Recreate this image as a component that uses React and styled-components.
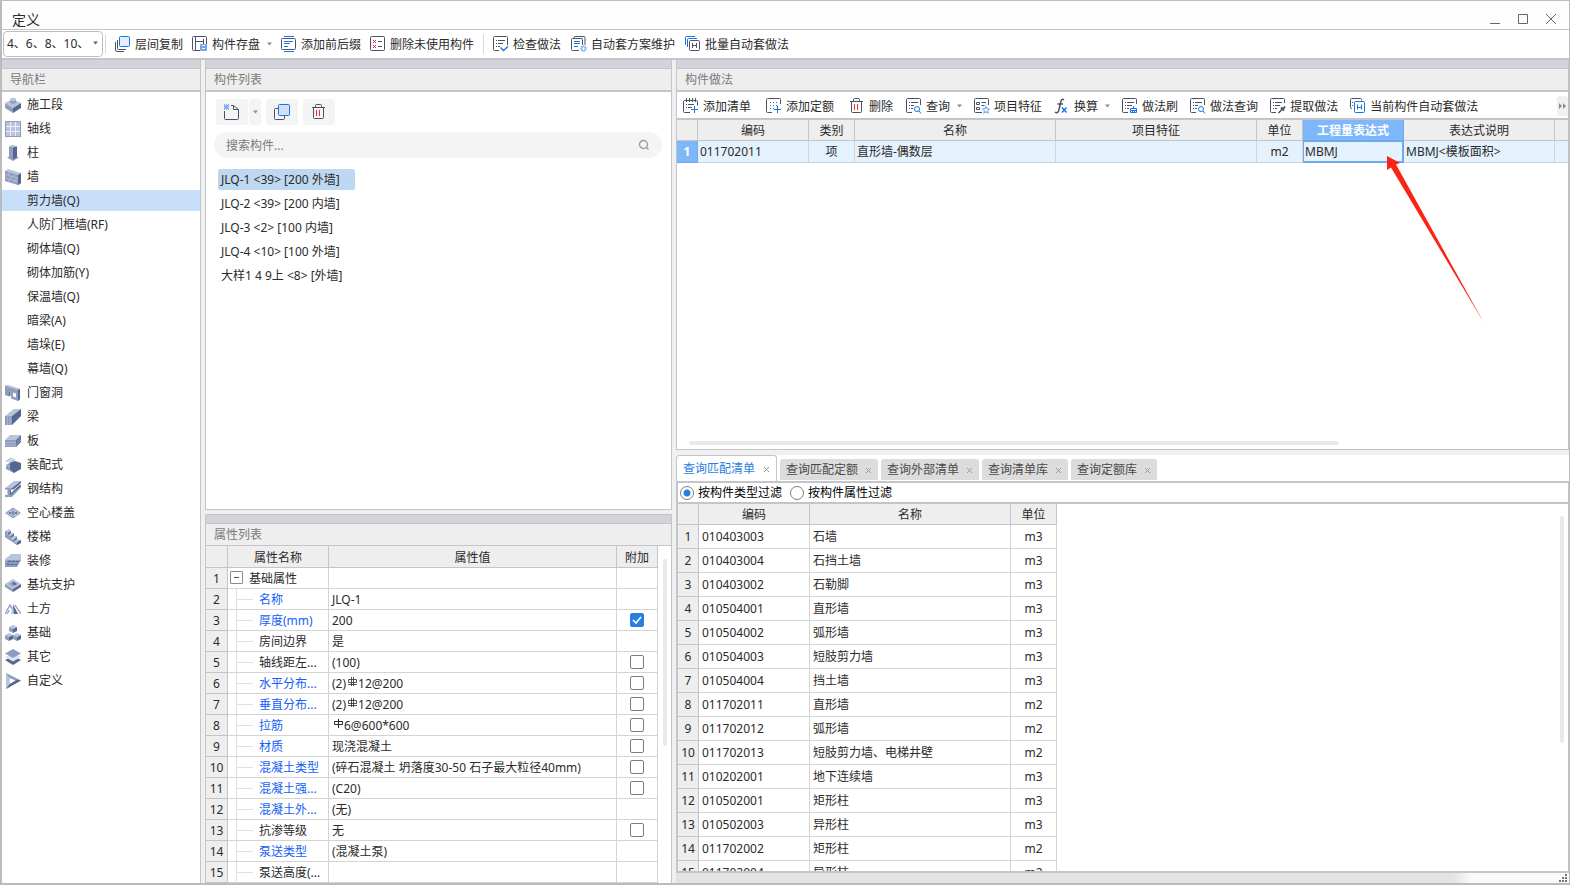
import React, { useState } from "react";
import styled, { createGlobalStyle, css } from "styled-components";

const colors = {
  line: "#c3c5cb",
  grid: "#d4d4d4",
  strip: "#d2d4da",
  head: "#eeeeee",
  text: "#2b2b2b",
  ink: "#4c5266",
  blue: "#1a73e8",
  light: "#b9c4da",
  mid: "#8c9dbf",
  dark: "#54688f",
};

const GlobalStyle = createGlobalStyle`
  * {
    box-sizing: border-box;
  }

  body {
    margin: 0;
    background: #f0f0f0;
  }

  body, button, input, select, table {
    font-family: "Noto Sans", "Noto Sans CJK SC", sans-serif;
    font-size: 12px;
    line-height: 16px;
    color: ${colors.text};
  }

  button {
    padding: 0;
    border: 0;
    background: none;
    cursor: pointer;
  }
`;

/* ---------- window ---------- */

const Window = styled.div`
  display: flex;
  flex-direction: column;
  height: 100vh;
  border: solid #bbbbbb;
  border-width: 1px 1px 2px 2px;
  background: #f0f0f0;
  overflow: hidden;
`;

const TitleBar = styled.header`
  display: flex;
  align-items: flex-end;
  justify-content: space-between;
  height: 29px;
  padding: 0 12px 0 10px;
  border-bottom: 1px solid ${colors.line};
  background: #fdfdfd;
  flex-shrink: 0;
`;

const WindowTitle = styled.h1`
  margin: 0;
  font-size: 14px;
  line-height: 18px;
  font-weight: 400;
`;

const WindowButtons = styled.div`
  display: flex;
  gap: 16px;
  padding-bottom: 4px;

  button {
    display: flex;
    width: 12px;
    height: 12px;
  }
`;

const Toolbar = styled.div`
  display: flex;
  align-items: center;
  flex-shrink: 0;
  overflow: hidden;
  white-space: nowrap;
  background: #ffffff;
  border-bottom: 2px solid ${colors.line};
`;

const MainToolbar = styled(Toolbar)`
  gap: 9px;
  height: 30px;
  padding-left: 1px;
`;

const MethodToolbar = styled(Toolbar)`
  gap: 13px;
  height: 28px;
  padding: 2px 0 0 6px;
`;

const Separator = styled.span`
  width: 1px;
  height: 20px;
  background: #d8d8d8;
`;

const FloorPicker = styled.label`
  position: relative;
  display: flex;
  margin-right: -7px;

  svg {
    position: absolute;
    right: 5px;
    top: 10px;
    pointer-events: none;
  }
`;

const FloorSelect = styled.select`
  appearance: none;
  width: 100px;
  height: 26px;
  padding: 0 18px 0 3px;
  border: 1px solid #bfbfbf;
  border-radius: 4px;
  background: #ffffff;
`;

const ToolButton = styled.button`
  display: flex;
  align-items: center;
  gap: 4px;
  height: 24px;
  white-space: nowrap;

  svg {
    flex-shrink: 0;
  }
`;

const ToolLabel = styled.span`
  padding-top: 2px;
`;

const CaretBox = styled.span`
  display: flex;
  padding-left: 3px;
`;

const ToolGroup = styled.div`
  display: flex;
  gap: ${(props) => props.$gap}px;
`;

const MoreButton = styled.button`
  display: flex;
  align-items: center;
  justify-content: center;
  width: 11px;
  height: 20px;
  margin-left: auto;
  border-radius: 3px;
  background: #f0f0f0;
`;

const Workspace = styled.main`
  display: grid;
  grid-template-columns: 199px minmax(0, 467fr) minmax(0, 893fr);
  gap: 4px;
  flex: 1;
  min-height: 0;
`;

const MiddleColumn = styled.div`
  display: grid;
  grid-template-rows: minmax(0, 450fr) minmax(0, 369fr);
  gap: 4px;
  min-height: 0;
`;

const RightColumn = styled.div`
  display: grid;
  grid-template-rows: minmax(0, 390fr) minmax(0, 423fr) 10px;
  min-height: 0;
`;

/* ---------- docked panels ---------- */

const Panel = styled.section`
  position: relative;
  display: flex;
  flex-direction: column;
  min-height: 0;
  background: #ffffff;
  border: solid ${colors.line};
  border-width: ${(props) => props.$edges};
`;

const PanelHead = styled.h2`
  flex-shrink: 0;
  margin: 0;
  padding: 2px 0 0 8px;
  border-top: 8px solid ${colors.strip};
  border-bottom: ${(props) => (props.$thin ? 1 : 2)}px solid ${colors.line};
  background: ${colors.head};
  box-shadow: inset 0 1px 0 ${colors.line};
  font-size: 12px;
  line-height: 20px;
  font-weight: 400;
  color: #7a7a7a;
`;

const NavList = styled.ul`
  margin: 0;
  padding: 1px 0 0;
  list-style: none;
`;

const NavItem = styled.li`
  padding: 1px 0 2px;
`;

const NavLink = styled.a`
  display: flex;
  align-items: center;
  gap: 6px;
  height: 21px;
  padding-left: ${(props) => (props.$child ? 25 : 3)}px;
  background: ${(props) => (props.$active ? "#c7dff9" : "transparent")};
  color: inherit;
  text-decoration: none;
`;

const ListTools = styled.div`
  display: flex;
  gap: 5px;
  padding: 7px 10px;
`;

const SoftButton = styled.button`
  display: flex;
  align-items: center;
  justify-content: center;
  width: ${(props) => (props.$narrow ? 12 : 32)}px;
  height: 26px;
  border-radius: 3px;
  background: #f4f4f4;
`;

const SplitButton = styled.div`
  display: flex;
  gap: 1px;
`;

const SearchBox = styled.label`
  display: flex;
  align-items: center;
  height: 26px;
  margin: 0 9px 0 8px;
  padding: 0 12px;
  border-radius: 13px;
  background: #f4f4f4;

  input {
    flex: 1;
    min-width: 0;
    padding: 2px 0 0;
    border: 0;
    outline: 0;
    background: transparent;
  }

  input::placeholder {
    color: #7a7a7a;
    opacity: 1;
  }
`;

const ComponentList = styled.div`
  display: flex;
  flex-direction: column;
  align-items: flex-start;
  gap: 3px;
  padding: 11px 12px;
`;

const ComponentRow = styled.button`
  min-width: 137px;
  height: 21px;
  padding: 0 3px;
  border-radius: 2px;
  text-align: left;
  background: ${(props) => (props.$active ? "#bfd8f2" : "transparent")};
`;

/* ---------- tables ---------- */

const TableArea = styled.div`
  display: flex;
  flex: 1;
  min-height: 0;
  overflow: hidden;
  align-items: flex-start;
`;

const Table = styled.table`
  table-layout: fixed;
  border-collapse: separate;
  border-spacing: 0;
  width: ${(props) => props.$width || "100%"};

  th,
  td {
    height: ${(props) => props.$row}px;
    padding: 0 4px 0 3px;
    border: solid ${colors.grid};
    border-width: 0 1px 1px 0;
    font-weight: 400;
    text-align: left;
    white-space: nowrap;
    overflow: hidden;
  }

  thead th {
    height: ${(props) => props.$head}px;
    padding: 2px 0 0;
    background: ${colors.head};
    border-color: ${colors.line};
    text-align: center;
  }

  tbody th {
    padding: 0;
    background: ${colors.head};
    border-color: ${colors.line};
    text-align: center;
  }
`;

const CenterCell = styled.td`
  && {
    padding: 0;
    text-align: center;
  }
`;

const MethodTable = styled(Table)`
  tbody td {
    padding-left: 2px;
    background: #e4f2fe;
  }

  tbody th {
    background: #7fb8fa;
    border-color: #6ea9ec;
    color: #ffffff;
    font-weight: 700;
  }

  th:last-child,
  td:last-child {
    border-right: 0;
  }
`;

const PropertyTable = styled(Table)`
  tbody th,
  tbody td {
    padding-top: 2px;
  }

  tbody td:first-of-type {
    padding: 0;
  }
`;

const ActiveHead = styled.th`
  && {
    background: #7fb8fa;
    border-color: #6ea9ec;
    color: #ffffff;
    font-weight: 700;
  }
`;

const ActiveCell = styled.td`
  && {
    box-shadow: inset 1px 0 0 #6ea9ec, inset 0 1px 0 #6ea9ec,
      inset -1px -1px 0 #6ea9ec;
    border-color: #6ea9ec;
  }
`;

const PropName = styled.div`
  display: flex;
  align-items: center;
  height: 20px;
  color: ${(props) => (props.$blue ? "#1560f5" : "inherit")};

  span {
    padding-top: 2px;
    overflow: hidden;
    text-overflow: ellipsis;
  }
`;

const Branch = styled.i`
  flex-shrink: 0;
  align-self: stretch;
  width: 17px;
  margin: 0 6px 0 8px;
  border-left: 1px solid #e0e0e0;
  background: linear-gradient(#e0e0e0, #e0e0e0) no-repeat left center / 100% 1px;
`;

const FoldButton = styled.button`
  display: flex;
  align-items: center;
  justify-content: center;
  flex-shrink: 0;
  width: 13px;
  height: 13px;
  margin: 0 6px 1px 2px;
  border: 1px solid #8a8a8a;
  border-radius: 1px;

  &::before {
    content: "";
    width: 5px;
    height: 1px;
    background: #555555;
  }
`;

const RebarMark = styled.svg`
  margin: 0 1px 0 2px;
  vertical-align: 1px;
`;

const Check = styled.input`
  appearance: none;
  display: block;
  width: 14px;
  height: 14px;
  margin: 0 auto;
  border: 1px solid #7d7d7d;
  border-radius: 2px;
  background: #ffffff;

  &:checked {
    border-color: #2a7de1;
    background: #2a7de1
      url("data:image/svg+xml,%3Csvg xmlns='http://www.w3.org/2000/svg' viewBox='0 0 12 12'%3E%3Cpath d='M2 6l3 3 5-6' fill='none' stroke='white' stroke-width='1.7'/%3E%3C/svg%3E")
      center / 12px 12px no-repeat;
  }
`;

const ScrollGutter = styled.div`
  align-self: stretch;
  flex-shrink: 0;
  width: 13px;
  padding: 13px 4px 0 5px;

  &::before {
    content: "";
    display: block;
    height: 187px;
    border-radius: 2px;
    background: #e9e9e9;
  }
`;

const QueryGutter = styled(ScrollGutter)`
  margin-left: auto;
  padding-top: 12px;

  &::before {
    height: 227px;
  }
`;

const BottomScroll = styled.div`
  width: 73%;
  height: 4px;
  margin: 0 0 4px 12px;
  flex-shrink: 0;
  border-radius: 2px;
  background: #e9e9e9;
`;

/* ---------- query tabs ---------- */

const QuerySection = styled.div`
  display: flex;
  flex-direction: column;
  min-height: 0;
  padding-top: 5px;
`;

const QueryBody = styled(Panel)`
  flex: 1;
`;

const Tabs = styled.div`
  display: flex;
  align-items: flex-end;
  gap: 3px;
  height: 26px;
  flex-shrink: 0;
  background: #ffffff;
`;

const Tab = styled.div`
  display: flex;
  align-items: center;
  gap: 7px;
  height: 21px;
  margin-bottom: 1px;
  padding: 0 6px;
  border-radius: 3px 3px 0 0;
  background: #dcdcdc;

  button {
    color: #4a4a4a;
  }

  ${(props) =>
    props.$active &&
    css`
      gap: 8px;
      height: 26px;
      margin-bottom: 0;
      border: solid ${colors.line};
      border-width: 1px 1px 0;
      background: #ffffff;

      button {
        color: #2a7de1;
      }
    `}
`;

const CloseButton = styled.button`
  display: flex;
  padding-top: 2px;
`;

const FilterBar = styled.div`
  display: flex;
  align-items: center;
  gap: 8px;
  height: 21px;
  padding-left: 2px;
  flex-shrink: 0;
  border-bottom: 2px solid ${colors.line};

  label {
    display: flex;
    align-items: center;
    gap: 4px;
    color: #000000;
  }
`;

const Radio = styled.input`
  appearance: none;
  width: 14px;
  height: 14px;
  margin: 0;
  border: 1px solid #7d7d7d;
  border-radius: 50%;
  background: #ffffff;

  &:checked {
    background: radial-gradient(circle, #2a7de1 3px, #ffffff 4px);
  }
`;

const StatusBar = styled.footer`
  display: flex;
  justify-content: flex-end;
  align-items: flex-end;
  background: linear-gradient(90deg, #e3e3e3 87%, #fafafa 89%);
`;

const Pointer = styled.svg`
  position: absolute;
  top: 96px;
  right: 83px;
  pointer-events: none;
`;

/* ---------- icons ---------- */

const Svg = ({ children, size = 16, ...rest }) => (
  <svg
    width={size}
    height={size}
    viewBox={`0 0 ${size} ${size}`}
    fill="none"
    stroke={colors.ink}
    aria-hidden="true"
    {...rest}
  >
    {children}
  </svg>
);

const Caret = ({ color = "#8c8c8c" }) => (
  <svg width="5" height="4" viewBox="0 0 5 4" aria-hidden="true">
    <path d="M0 0.5h5L2.5 3.5z" fill={color} />
  </svg>
);

const SheetLines = () => (
  <path d="M3 4.500h1M5 4.500h7M3 7.500h1M5 7.500h5M3 10.500h1M5 10.500h2" />
);

const icons = {
  copyLayer: (
    <Svg>
      <path d="M2.500 4v8.500q0 1 1 1H11M.5 6v8q0 1.500 1.500 1.500h7" />
      <rect x="4.500" y=".5" width="10" height="10" rx="1" fill="#e3effd" stroke={colors.blue} />
    </Svg>
  ),
  save: (
    <Svg>
      <path d="M8 14.500H1.500q-1 0-1-1v-12q0-1 1-1h12q1 0 1 1V8M3.500 1v13M3.500 5.500h8M11.500 3v5" />
      <rect x="8" y="8" width="7" height="7" rx="1" fill="#6fa4ee" stroke="none" />
      <path d="M10 12.500h3M10 9.500h3" stroke="#fff" />
    </Svg>
  ),
  affix: (
    <Svg>
      <path d="M3 .5h10M3 15.500h10" stroke={colors.blue} />
      <rect x=".5" y="2.500" width="14" height="11" rx="1" />
      <path d="M3 5.500h9M3 7.500h6M3 10.500h4" stroke={colors.blue} />
    </Svg>
  ),
  removeUnused: (
    <Svg>
      <rect x=".5" y=".5" width="14" height="14" rx="1" />
      <path d="M3 4l3 3M6 4L3 7M3 9l3 3M6 9l-3 3" stroke="#e0303a" />
      <path d="M8 5.500h4M8 10.500h4" />
    </Svg>
  ),
  check: (
    <Svg>
      <path d="M6 14.500H1.500q-1 0-1-1v-12q0-1 1-1h12q1 0 1 1V9" />
      <SheetLines />
      <path d="M7.500 11.500l3 3 4.500-4" stroke={colors.blue} strokeWidth="1.400" />
    </Svg>
  ),
  scheme: (
    <Svg>
      <path d="M3 2.500V1.500q0-1 1-1h9q1 0 1 1V9" />
      <path d="M8 14.500H1.500q-1 0-1-1v-10q0-1 1-1H11q.5 0 .5 1V9" />
      <path d="M3 5.500h6M3 7.500h6M3 10.500h4" stroke={colors.blue} />
      <circle cx="12.500" cy="12.500" r="2.200" stroke="#6fa4ee" strokeWidth="2" strokeDasharray="1.300 .5" />
    </Svg>
  ),
  batch: (
    <Svg>
      <path d="M.5 9V1.500q0-1 1-1H10M2.500 11V3.500q0-1 1-1H12" stroke={colors.blue} />
      <rect x="4.500" y="4.500" width="10" height="10" rx="1" />
      <path d="M7.500 7v5M11.500 7v5M7.500 9.500h4" />
    </Svg>
  ),
  addList: (
    <Svg>
      <path d="M7 14.500H1.500q-1 0-1-1v-10q0-1 1-1h12q1 0 1 1v4M3.500 0v4M6.500 0v4M9.500 0v4M12.500 0v4" />
      <path d="M3 6.500h1M5 6.500h6M3 9.500h1M5 9.500h4" />
      <path d="M11.500 8v7M8 11.500h7" stroke={colors.blue} />
    </Svg>
  ),
  addQuota: (
    <Svg>
      <path d="M6 14.500H1.500q-1 0-1-1v-12q0-1 1-1h12q1 0 1 1V6" />
      <path d="M4 4.500h1M7 4.500h1M10 4.500h1M4 7.500h1M7 7.500h1M10 7.500h1M4 10.500h1M7 10.500h1" stroke={colors.blue} />
      <path d="M11.500 8v7M8 11.500h7" stroke={colors.blue} />
    </Svg>
  ),
  trash: (
    <Svg>
      <path d="M1 3.500h13M4.500 3V1.500q0-1 1-1h4q1 0 1 1V3M2.500 3.500v10q0 1 1 1h8q1 0 1-1v-10" />
      <path d="M5.500 6v6M8.500 6v6" stroke="#e0303a" />
    </Svg>
  ),
  query: (
    <Svg>
      <path d="M6 14.500H1.500q-1 0-1-1v-12q0-1 1-1h12q1 0 1 1V7" />
      <path d="M3 4.500h1M5 4.500h7M3 7.500h1M5 7.500h3M3 10.500h1M5 10.500h2" />
      <circle cx="11" cy="11" r="2.500" stroke={colors.blue} />
      <path d="M13 13l2 2.500" stroke={colors.blue} />
    </Svg>
  ),
  feature: (
    <Svg>
      <path d="M8 14.500H1.500q-1 0-1-1v-12q0-1 1-1h12q1 0 1 1V7" />
      <path d="M2.500 4.500h3v2h-3zM2.500 9.500h3v2h-3zM7.500 4.500H12M7.500 7.500h3" />
      <path d="M12 8.500l1 2.300 2.500.2-1.900 1.600.6 2.600L12 13.800l-2.200 1.400.6-2.600L8.500 11l2.500-.2z" stroke="#5b9bf0" />
    </Svg>
  ),
  brush: (
    <Svg>
      <path d="M6 14.500H1.500q-1 0-1-1v-12q0-1 1-1h12q1 0 1 1V6" />
      <SheetLines />
      <path d="M11.500 8v2.500M8.500 14.500v-4h6v4zM8.500 12.500h6M10.500 13v2M12.500 13v2" stroke={colors.blue} />
    </Svg>
  ),
  extract: (
    <Svg>
      <path d="M6 14.500H1.500q-1 0-1-1v-12q0-1 1-1h12q1 0 1 1V5" />
      <SheetLines />
      <path d="M8.500 15l4-4" strokeWidth="1.600" />
      <path d="M11 9.500l3 3M13 11l2-2.500" strokeWidth="2" />
    </Svg>
  ),
  current: (
    <Svg>
      <path d="M2 10.500q-1.500 0-1.500-1v-8q0-1 1-1h9q1 0 1 1v1" />
      <path d="M2 4.500h1M2 7.500h1" />
      <rect x="4.500" y="3.500" width="10" height="11" rx="1" stroke={colors.blue} />
      <path d="M7.500 6.500v5M11.500 6.500v5M7.500 9.500h4" stroke={colors.blue} />
    </Svg>
  ),
  convert: (
    <Svg>
      <path d="M10 1.800C7.800.2 7 2.500 6.500 5L5 11.500C4.500 14.500 3 15.500 1 14M3.500 6H9" strokeWidth="1.500" />
      <path d="M8 9.500l4.500 5M12.500 9.500l-4.500 5" stroke={colors.blue} strokeWidth="1.500" />
    </Svg>
  ),
  newFile: (
    <Svg>
      <path d="M.5 7v7.500q0 1 1 1h12q1 0 1-1V5.500L9.500 1.500H7M9.500 1.500v4h5" />
      <path d="M0 1h5M1 2h4M0 3h5M1 4h4M0 5h5" stroke={colors.blue} strokeDasharray="1 1" />
    </Svg>
  ),
  duplicate: (
    <Svg>
      <path d="M4 4.500H1.500q-1 0-1 1v9q0 1 1 1h8q1 0 1-1V12" />
      <rect x="4.500" y=".5" width="11" height="11" rx="1" fill="#cfe0f7" stroke={colors.blue} />
    </Svg>
  ),
};

const { light, mid, dark } = colors;

const navIcons = {
  stage: (
    <>
      <path d="M0 6l8-4 8 4-8 5z" fill={light} />
      <path d="M0 6l8 5v5l-8-5z" fill={mid} />
      <path d="M16 6l-8 5v5l8-5z" fill={dark} />
      <path d="M5 2.500v3q3 2.500 6 0v-3z" fill={mid} />
      <ellipse cx="8" cy="2.500" rx="3" ry="1.800" fill={light} />
    </>
  ),
  axis: (
    <>
      <path d="M0 0h16v16H0z" fill={mid} />
      <path d="M1 1h14v14H1z" fill={light} />
      <path d="M5.500 1v14M10.500 1v14M1 5.500h14M1 10.500h14" stroke="#eef1f7" />
    </>
  ),
  column: (
    <>
      <path d="M2 12.500L8 10l6 2.500L8 16z" fill={mid} />
      <path d="M4 1.500L8 0l4 1.500V12l-4 2.500L4 12z" fill={mid} />
      <path d="M8 2.500l4-1V12l-4 2.500z" fill={dark} />
      <path d="M4 1.500L8 0l4 1.500-4 1z" fill={light} />
    </>
  ),
  wall: (
    <>
      <path d="M0 2l3-2 13 4v10l-2 2-14-4z" fill={light} />
      <path d="M0 2l13 4v10L0 12z" fill={mid} />
      <path d="M13 6l3-2v10l-3 2z" fill={dark} />
      <path d="M0 5.300l13 4M0 8.700l13 4M4 3.200v3.300M9 4.700V8M6 7v3.500M11 8.700v3.300M4 10v3M9 11.500v3" stroke={light} strokeWidth=".8" />
    </>
  ),
  opening: (
    <>
      <path d="M0 1l2-1 13 4v10l-2 2-7-2.500V7L4 6.500v5L0 10z" fill={mid} />
      <path d="M0 1l2-1 13 4-2 1z" fill={light} />
      <path d="M13 5l2-1v10l-2 2zM4 6.500l1.500.5v3.500l-1.500 1z" fill={dark} />
      <path d="M8 7.500l3 1v4l-3-1z" fill="#ffffff" />
    </>
  ),
  beam: (
    <>
      <path d="M0 7l9-7h7L7 7z" fill={light} />
      <path d="M0 7h7v9H0z" fill={mid} />
      <path d="M16 0v7l-9 9V7z" fill={dark} />
      <path d="M2.500 7v9M5 7v9" stroke={light} strokeWidth=".6" />
    </>
  ),
  slab: (
    <>
      <path d="M0 7l5-5h11l-5 5z" fill={light} />
      <path d="M0 7h11v7H0z" fill={mid} />
      <path d="M11 7l5-5v7l-5 5z" fill={dark} />
      <path d="M0 9.500h11l5-5M0 12h11l5-5" stroke={light} strokeWidth=".7" />
    </>
  ),
  prefab: (
    <>
      <path d="M1 8l7-4 8 3-7 4z" fill={mid} />
      <path d="M1 8l8 4v4l-8-4z" fill={mid} />
      <path d="M5 6l5-2 6 2v6l-7 4-4-4z" fill={dark} />
      <path d="M1 4.500l6-3.500M4 5.500l6-3.500" stroke={light} strokeWidth="1.500" />
    </>
  ),
  steel: (
    <>
      <path d="M0 7L9 0h7L7 7z" fill={light} />
      <path d="M0 7h7v1.500H5v4h3L16 4v2.500L7 16H0v-2h2.500V8.500H0z" fill={mid} />
      <path d="M7 7l9-7v2L8.500 8.500H6v4L5 13V8.500h2z" fill={dark} />
      <path d="M5 13L15 3.500 16 5 6 14z" fill={dark} />
    </>
  ),
  hollow: (
    <>
      <path d="M0 8l8-5.500L16 8l-8 5.500z" fill={mid} />
      <path d="M2.500 8l5.500 3.500M5.200 6.300l5.500 3.500M8 4.500L13.500 8M2.500 8L8 4.500M5.200 9.700l5.500-3.500M8 11.500L13.500 8" stroke="#e6ebf4" strokeWidth=".6" />
      <path d="M6.500 8L8 7l1.500 1L8 9zM3.500 8L5 7l1.200 1L5 9zM10 8l1.200-1 1.300 1-1.300 1z" fill={dark} />
    </>
  ),
  stair: (
    <>
      <path d="M0 2l4-2 2 2v2l3 0v3l3 0v3l4 1v3l-4 2L0 8z" fill={light} />
      <path d="M0 2l2.500 1.500V6L6 7v3l3 1v2l3 1v2L0 8z" fill={mid} />
      <path d="M3 4l3-2v2L3 6zM6 7l3-2.500v2L6 9zM9 10.500L12 8v2l-3 2.500zM12 13l4-2v3l-4 2z" fill={dark} />
    </>
  ),
  finish: (
    <>
      <path d="M0 6l6-5h10v6l-4 6H0z" fill={light} />
      <path d="M0 8l3-1h13l-4 7H0z" fill={mid} />
      <path d="M3 8.500h11M2 11.500h10" stroke={dark} strokeDasharray="3 1" />
    </>
  ),
  pit: (
    <>
      <path d="M0 7l8-5 8 5-8 5z" fill={light} />
      <path d="M0 7l8 5v3l-8-5z" fill={mid} />
      <path d="M16 7l-8 5v3l8-5z" fill={dark} />
      <path d="M4 7l4-2.500L12 7 8 9.500z" fill={mid} />
      <path d="M8 4.500V7l2 1.200L12 7z" fill={dark} />
    </>
  ),
  earth: (
    <>
      <path d="M0 13L5 4l2 4M2 13l2.500-4" stroke={mid} strokeWidth="1.300" />
      <path d="M8 3l3 10H6z" fill={light} />
      <path d="M8 3l5 10H9z" fill={dark} />
      <path d="M10 4l6 9" stroke={mid} strokeWidth="1.300" />
    </>
  ),
  base: (
    <>
      {[[8, 0], [4, 8], [12, 8]].map(([x, y]) => (
        <g key={x} transform={`translate(${x} ${y})`}>
          <path d="M-4 2L0 0l4 2-4 2z" fill={light} />
          <path d="M-4 2l4 2v4l-4-2z" fill={mid} />
          <path d="M4 2L0 4v4l4-2z" fill={dark} />
        </g>
      ))}
    </>
  ),
  other: (
    <>
      <path d="M0 11l8-4 8 4-8 5z" fill={dark} />
      <path d="M0 8l8-4 8 4-8 4.500z" fill="#dfe5f0" />
      <path d="M0 4.500L8 0l8 4.500L8 9z" fill={mid} />
    </>
  ),
  custom: (
    <>
      <path d="M1 0l15 7.500L1 16zM4.500 5v6.200l6-3.700z" fill={mid} fillRule="evenodd" />
      <path d="M1 16l15-8.500-4-.8-7.500 4.500z" fill={dark} />
      <path d="M1 0l3.500 5v6L1 16z" fill={light} />
    </>
  ),
};

/* rebar grade marks that sit inside property values */
const Rebar = ({ plain }) => (
  <RebarMark width="9" height="10" viewBox="0 0 9 10" fill="none" stroke={colors.text} aria-hidden="true">
    {plain ? (
      <path d="M4.500 0v9M.5 2.500h8v3h-8z" />
    ) : (
      <path d="M3.500 0v9M5.500 0v9M.5 2.500h8v3h-8zM0 7.500h9" strokeWidth=".8" />
    )}
  </RebarMark>
);

/* ---------- data ---------- */

const navigation = [
  { label: "施工段", icon: "stage" },
  { label: "轴线", icon: "axis" },
  { label: "柱", icon: "column" },
  { label: "墙", icon: "wall" },
  { label: "剪力墙(Q)" },
  { label: "人防门框墙(RF)" },
  { label: "砌体墙(Q)" },
  { label: "砌体加筋(Y)" },
  { label: "保温墙(Q)" },
  { label: "暗梁(A)" },
  { label: "墙垛(E)" },
  { label: "幕墙(Q)" },
  { label: "门窗洞", icon: "opening" },
  { label: "梁", icon: "beam" },
  { label: "板", icon: "slab" },
  { label: "装配式", icon: "prefab" },
  { label: "钢结构", icon: "steel" },
  { label: "空心楼盖", icon: "hollow" },
  { label: "楼梯", icon: "stair" },
  { label: "装修", icon: "finish" },
  { label: "基坑支护", icon: "pit" },
  { label: "土方", icon: "earth" },
  { label: "基础", icon: "base" },
  { label: "其它", icon: "other" },
  { label: "自定义", icon: "custom" },
];

const componentNames = [
  "JLQ-1 <39> [200 外墙]",
  "JLQ-2 <39> [200 内墙]",
  "JLQ-3 <2> [100 内墙]",
  "JLQ-4 <10> [100 外墙]",
  "大样1 4 9上 <8> [外墙]",
];

const properties = [
  { name: "名称", value: "JLQ-1", blue: true },
  { name: "厚度(mm)", value: "200", blue: true, check: true, checked: true },
  { name: "房间边界", value: "是" },
  { name: "轴线距左...", value: "(100)", check: true },
  { name: "水平分布...", value: <>(2)<Rebar />12@200</>, blue: true, check: true },
  { name: "垂直分布...", value: <>(2)<Rebar />12@200</>, blue: true, check: true },
  { name: "拉筋", value: <><Rebar plain />6@600*600</>, blue: true, check: true },
  { name: "材质", value: "现浇混凝土", blue: true, check: true },
  { name: "混凝土类型", value: "(碎石混凝土 坍落度30-50 石子最大粒径40mm)", blue: true, check: true },
  { name: "混凝土强...", value: "(C20)", blue: true, check: true },
  { name: "混凝土外...", value: "(无)", blue: true },
  { name: "抗渗等级", value: "无", check: true },
  { name: "泵送类型", value: "(混凝土泵)", blue: true },
  { name: "泵送高度(...", value: "" },
];

const queryRows = [
  ["010403003", "石墙", "m3"],
  ["010403004", "石挡土墙", "m3"],
  ["010403002", "石勒脚", "m3"],
  ["010504001", "直形墙", "m3"],
  ["010504002", "弧形墙", "m3"],
  ["010504003", "短肢剪力墙", "m3"],
  ["010504004", "挡土墙", "m3"],
  ["011702011", "直形墙", "m2"],
  ["011702012", "弧形墙", "m2"],
  ["011702013", "短肢剪力墙、电梯井壁", "m2"],
  ["010202001", "地下连续墙", "m3"],
  ["010502001", "矩形柱", "m3"],
  ["010502003", "异形柱", "m3"],
  ["011702002", "矩形柱", "m2"],
  ["011702004", "异形柱", "m2"],
];

const queryTabs = ["查询匹配清单", "查询匹配定额", "查询外部清单", "查询清单库", "查询定额库"];

/* ---------- parts ---------- */

const Tool = ({ icon, label, menu }) => (
  <ToolButton type="button">
    {icons[icon]}
    <ToolLabel>{label}</ToolLabel>
    {menu && (
      <CaretBox>
        <Caret />
      </CaretBox>
    )}
  </ToolButton>
);

const Navigation = () => (
  <Panel as="nav" $edges="0 1px 0 0">
    <PanelHead>导航栏</PanelHead>
    <NavList>
      {navigation.map(({ label, icon }) => (
        <NavItem key={label}>
          <NavLink href="#" $child={!icon} $active={label === "剪力墙(Q)"}>
            {icon && <Svg stroke="none">{navIcons[icon]}</Svg>}
            {label}
          </NavLink>
        </NavItem>
      ))}
    </NavList>
  </Panel>
);

const Components = () => {
  const [selected, setSelected] = useState(componentNames[0]);

  return (
    <Panel $edges="0 1px 1px 1px">
      <PanelHead>构件列表</PanelHead>
      <ListTools>
        <SplitButton>
          <SoftButton type="button" aria-label="新建">{icons.newFile}</SoftButton>
          <SoftButton type="button" $narrow aria-label="新建选项">
            <Caret />
          </SoftButton>
        </SplitButton>
        <SoftButton type="button" aria-label="复制">{icons.duplicate}</SoftButton>
        <SoftButton type="button" aria-label="删除">{icons.trash}</SoftButton>
      </ListTools>
      <SearchBox>
        <input type="text" placeholder="搜索构件..." aria-label="搜索构件" />
        <Svg size={12} stroke="#9a9a9a">
          <circle cx="5.500" cy="5.500" r="4" strokeWidth="1.300" />
          <path d="M8 8l2.500 2.500" strokeWidth="1.300" />
        </Svg>
      </SearchBox>
      <ComponentList>
        {componentNames.map((name) => (
          <ComponentRow
            key={name}
            type="button"
            $active={name === selected}
            onClick={() => setSelected(name)}
          >
            {name}
          </ComponentRow>
        ))}
      </ComponentList>
    </Panel>
  );
};

const Properties = () => (
  <Panel $edges="1px 1px 0 1px">
    <PanelHead $thin>属性列表</PanelHead>
    <TableArea>
      <PropertyTable $row={21} $head={22}>
        <colgroup>
          <col style={{ width: 22 }} />
          <col style={{ width: 101 }} />
          <col />
          <col style={{ width: 41 }} />
        </colgroup>
        <thead>
          <tr>
            <th />
            <th>属性名称</th>
            <th>属性值</th>
            <th>附加</th>
          </tr>
        </thead>
        <tbody>
          <tr>
            <th>1</th>
            <td>
              <PropName>
                <FoldButton type="button" aria-label="折叠" />
                <span>基础属性</span>
              </PropName>
            </td>
            <td />
            <td />
          </tr>
          {properties.map(({ name, value, blue, check, checked }, index) => (
            <tr key={name}>
              <th>{index + 2}</th>
              <td>
                <PropName $blue={blue}>
                  <Branch />
                  <span>{name}</span>
                </PropName>
              </td>
              <td>{value}</td>
              <CenterCell>
                {check && <Check type="checkbox" defaultChecked={checked} aria-label={name} />}
              </CenterCell>
            </tr>
          ))}
        </tbody>
      </PropertyTable>
      <ScrollGutter />
    </TableArea>
  </Panel>
);

const Methods = () => (
  <Panel $edges="0 1px 1px 1px">
    <PanelHead>构件做法</PanelHead>
    <MethodToolbar>
      <ToolGroup $gap={15}>
        <Tool icon="addList" label="添加清单" />
        <Tool icon="addQuota" label="添加定额" />
        <Tool icon="trash" label="删除" />
      </ToolGroup>
      <ToolGroup $gap={12}>
        <Tool icon="query" label="查询" menu />
        <Tool icon="feature" label="项目特征" />
        <Tool icon="convert" label="换算" menu />
        <Tool icon="brush" label="做法刷" />
        <Tool icon="query" label="做法查询" />
        <Tool icon="extract" label="提取做法" />
        <Tool icon="current" label="当前构件自动套做法" />
      </ToolGroup>
      <MoreButton type="button" aria-label="更多">
        <svg width="7" height="6" viewBox="0 0 7 6" fill="#8a8a8a" aria-hidden="true">
          <path d="M0 0l3 3-3 3zM4 0l3 3-3 3z" />
        </svg>
      </MoreButton>
    </MethodToolbar>
    <TableArea>
      <MethodTable $row={22} $head={21}>
        <colgroup>
          {[21, 111, 46, 201, 201, 46, 101, 151].map((width, index) => (
            <col key={index} style={{ width }} />
          ))}
          <col />
        </colgroup>
        <thead>
          <tr>
            <th />
            <th>编码</th>
            <th>类别</th>
            <th>名称</th>
            <th>项目特征</th>
            <th>单位</th>
            <ActiveHead>工程量表达式</ActiveHead>
            <th>表达式说明</th>
            <th />
          </tr>
        </thead>
        <tbody>
          <tr>
            <th>1</th>
            <td>011702011</td>
            <CenterCell>项</CenterCell>
            <td>直形墙-偶数层</td>
            <td />
            <CenterCell>m2</CenterCell>
            <ActiveCell>MBMJ</ActiveCell>
            <td>MBMJ&lt;模板面积&gt;</td>
            <td />
          </tr>
        </tbody>
      </MethodTable>
    </TableArea>
    <BottomScroll />
    <Pointer width="98" height="168" viewBox="0 0 98 168" fill="#fb2414" aria-hidden="true">
      <path d="M0 0l13 7-4 1.500L97 167 4 11.500 0 14z" />
    </Pointer>
  </Panel>
);

const Query = () => {
  const [filter, setFilter] = useState("type");

  return (
    <QuerySection>
      <Tabs>
        {queryTabs.map((label, index) => (
          <Tab key={label} $active={index === 0}>
            <button type="button">{label}</button>
            <CloseButton type="button" aria-label={`关闭${label}`}>
              <Svg size={7} stroke="#9a9a9a">
                <path d="M1 1l5 5M6 1L1 6" />
              </Svg>
            </CloseButton>
          </Tab>
        ))}
      </Tabs>
      <QueryBody as="div" $edges="2px 1px 2px 2px">
        <FilterBar>
          <label>
            <Radio
              type="radio"
              name="filter"
              checked={filter === "type"}
              onChange={() => setFilter("type")}
            />
            按构件类型过滤
          </label>
          <label>
            <Radio
              type="radio"
              name="filter"
              checked={filter === "property"}
              onChange={() => setFilter("property")}
            />
            按构件属性过滤
          </label>
        </FilterBar>
        <TableArea>
          <Table $row={24} $head={21} $width="379px">
            <colgroup>
              {[21, 111, 201, 46].map((width, index) => (
                <col key={index} style={{ width }} />
              ))}
            </colgroup>
            <thead>
              <tr>
                <th />
                <th>编码</th>
                <th>名称</th>
                <th>单位</th>
              </tr>
            </thead>
            <tbody>
              {queryRows.map(([code, name, unit], index) => (
                <tr key={code}>
                  <th>{index + 1}</th>
                  <td>{code}</td>
                  <td>{name}</td>
                  <CenterCell>{unit}</CenterCell>
                </tr>
              ))}
            </tbody>
          </Table>
          <QueryGutter />
        </TableArea>
      </QueryBody>
    </QuerySection>
  );
};

const App = () => (
  <>
    <GlobalStyle />
    <Window>
      <TitleBar>
        <WindowTitle>定义</WindowTitle>
        <WindowButtons>
          <button type="button" aria-label="最小化">
            <Svg size={12} stroke="#666666">
              <path d="M1 10.500h10" />
            </Svg>
          </button>
          <button type="button" aria-label="最大化">
            <Svg size={12} stroke="#666666">
              <path d="M1.500 1.500h9v9h-9z" />
            </Svg>
          </button>
          <button type="button" aria-label="关闭">
            <Svg size={12} stroke="#666666">
              <path d="M1 1l10 10M11 1L1 11" />
            </Svg>
          </button>
        </WindowButtons>
      </TitleBar>
      <MainToolbar>
        <FloorPicker>
          <FloorSelect aria-label="楼层">
            <option>4、6、8、10、</option>
          </FloorSelect>
          <Caret color="#666666" />
        </FloorPicker>
        <Separator />
        <Tool icon="copyLayer" label="层间复制" />
        <Tool icon="save" label="构件存盘" menu />
        <Tool icon="affix" label="添加前后缀" />
        <Tool icon="removeUnused" label="删除未使用构件" />
        <Separator />
        <ToolGroup $gap={10}>
          <Tool icon="check" label="检查做法" />
          <Tool icon="scheme" label="自动套方案维护" />
          <Tool icon="batch" label="批量自动套做法" />
        </ToolGroup>
      </MainToolbar>
      <Workspace>
        <Navigation />
        <MiddleColumn>
          <Components />
          <Properties />
        </MiddleColumn>
        <RightColumn>
          <Methods />
          <Query />
          <StatusBar>
            <svg width="11" height="9" viewBox="0 0 11 9" fill="#70747c" aria-hidden="true">
              <path d="M7 0h2v2H7zM4 3h2v2H4zM7 3h2v2H7zM1 6h2v2H1zM4 6h2v2H4zM7 6h2v2H7z" />
            </svg>
          </StatusBar>
        </RightColumn>
      </Workspace>
    </Window>
  </>
);

export default App;
